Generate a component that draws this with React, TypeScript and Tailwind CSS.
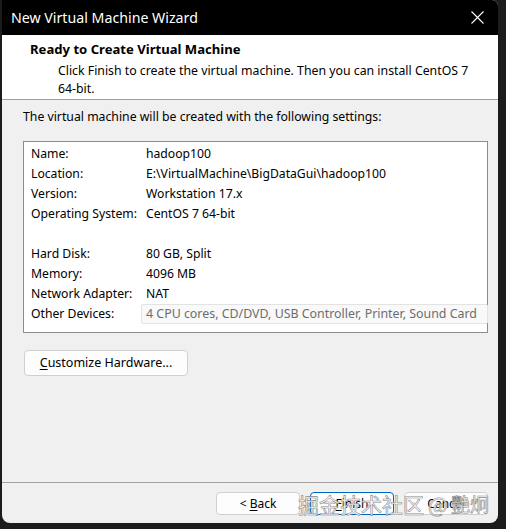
import React from 'react';

const font = { fontFamily: '"Noto Sans", "Open Sans", sans-serif' };

type Row = { label: string; value: string; field?: boolean };

const rows: (Row | null)[] = [
  { label: 'Name:', value: 'hadoop100' },
  { label: 'Location:', value: 'E:\\VirtualMachine\\BigDataGui\\hadoop100' },
  { label: 'Version:', value: 'Workstation 17.x' },
  { label: 'Operating System:', value: 'CentOS 7 64-bit' },
  null,
  { label: 'Hard Disk:', value: '80 GB, Split' },
  { label: 'Memory:', value: '4096 MB' },
  { label: 'Network Adapter:', value: 'NAT' },
  { label: 'Other Devices:', value: '4 CPU cores, CD/DVD, USB Controller, Printer, Sound Card', field: true },
];

function WinButton({ children, primary }: { children: React.ReactNode; primary?: boolean }) {
  return (
    <button
      type="button"
      className={`h-[23px] w-[84px] rounded-[4px] border bg-[#fdfdfd] text-[12px] text-black ${
        primary ? 'border-[#0067c0] border-[1.5px]' : 'border-[#d0d0d0]'
      }`}
    >
      {children}
    </button>
  );
}

export default function App() {
  return (
    <div className="h-[529px] w-[506px] bg-[#1c1c1c] pl-[2px]" style={font}>
      <div className="relative flex h-[523px] w-[496px] flex-col overflow-hidden rounded-b-[8px] rounded-tr-[6px] bg-[#f0f0f0]">
        {/* title bar */}
        <div className="flex h-[35px] shrink-0 items-center justify-between bg-black pl-[9px] pr-[14px]">
          <span className="text-[14.2px] text-white">New Virtual Machine Wizard</span>
          <svg width="13" height="13" viewBox="0 0 13 13" className="mb-[1px]">
            <path d="M0.5 0.5 L12.5 12.5 M12.5 0.5 L0.5 12.5" stroke="#fff" strokeWidth="1.1" />
          </svg>
        </div>

        {/* header */}
        <div className="shrink-0 border-b border-[#a0a0a0] bg-white pb-px pl-[28px] pt-[6px]">
          <div className="text-[13.1px] font-bold leading-[16px] text-black">Ready to Create Virtual Machine</div>
          <div className="mt-[5px] pl-[28px] pr-[20px] text-[12.3px] leading-[18px] text-black">
            Click Finish to create the virtual machine. Then you can install CentOS 7 64-bit.
          </div>
        </div>

        {/* body */}
        <div className="flex flex-1 flex-col pl-[21px] pr-[10px] pt-[8px]">
          <div className="text-[12.25px] leading-[18px] text-black">
            The virtual machine will be created with the following settings:
          </div>

          <div className="mt-[15px] w-[465px] border border-[#8c8c8c] bg-white pb-[8px] pl-[7px] pt-[2px]">
            {rows.map((r, i) =>
              r ? (
                <div key={i} className="grid h-[20px] grid-cols-[115px_1fr] items-center text-[12.2px] text-black">
                  <span>{r.label}</span>
                  {r.field ? (
                    <span className="-ml-[5px] -mr-px flex h-[20px] items-center rounded-[2px] border border-[#e3e3e3] bg-[#f9f9f9] pl-[4px] text-[12.4px] text-[#6d6d6d]">
                      {r.value}
                    </span>
                  ) : (
                    <span>{r.value}</span>
                  )}
                </div>
              ) : (
                <div key={i} className="h-[20px]" />
              )
            )}
          </div>

          <button
            type="button"
            className="ml-px mt-[17px] h-[26px] w-[164px] rounded-[4px] border border-[#d0d0d0] bg-[#fdfdfd] text-[12.5px] text-black"
          >
            <span className="underline underline-offset-2">C</span>ustomize Hardware...
          </button>
        </div>

        {/* footer */}
        <div className="flex h-[41px] shrink-0 items-start justify-end gap-[10px] border-t border-[#a0a0a0] pr-[10px] pt-[9px]">
          <WinButton>
            &lt; <span className="underline underline-offset-2">B</span>ack
          </WinButton>
          <WinButton primary>
            <span className="underline underline-offset-2">F</span>inish
          </WinButton>
          <WinButton>Cancel</WinButton>
        </div>

        {/* site watermark over the footer */}
        <div
          className="pointer-events-none absolute bottom-[6px] left-[296px] flex items-center whitespace-nowrap text-[21px] leading-[26px] text-white/85 [-webkit-text-stroke:0.6px_#8a8a8a]"
          style={{ fontFamily: '"Noto Sans CJK SC", "Noto Sans", sans-serif' }}
        >
          <span>掘金技术社区</span>
          <span className="ml-[4px]">@</span>
          <span className="ml-[3px] text-[19px]">艷炯</span>
        </div>
      </div>
    </div>
  );
}
